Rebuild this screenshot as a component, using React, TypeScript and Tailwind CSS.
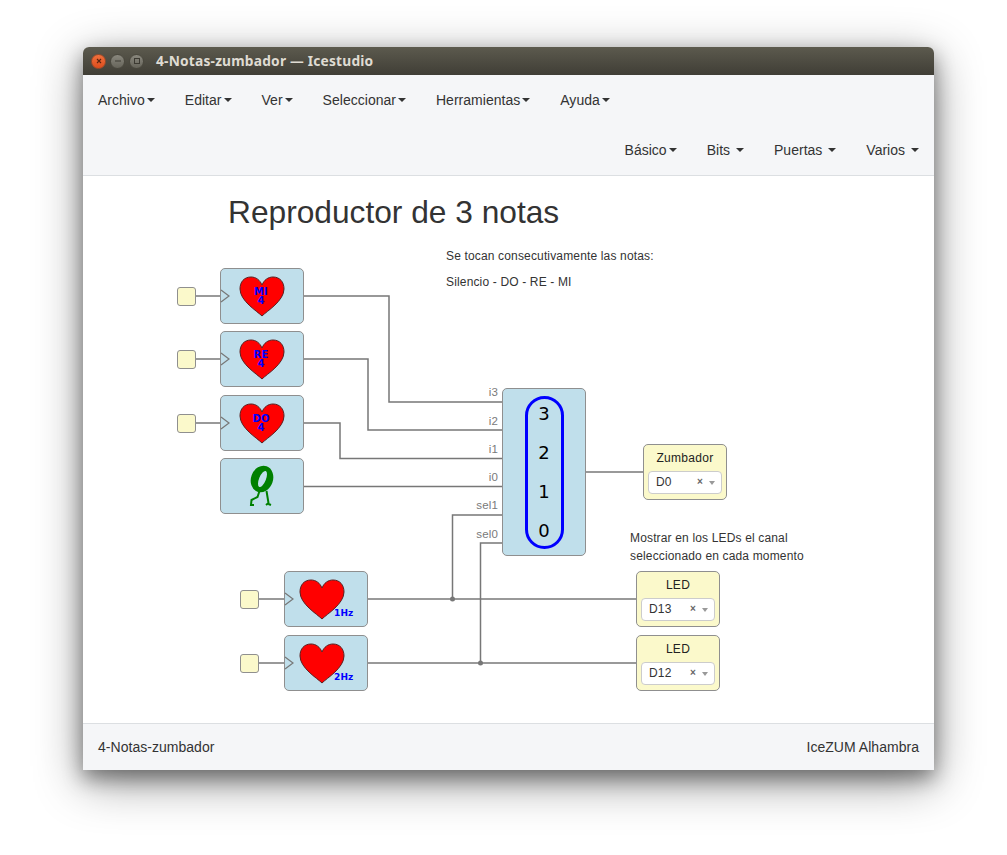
const menuLeft = ["Archivo", "Editar", "Ver", "Seleccionar", "Herramientas", "Ayuda"];

const Caret = () => (
  <span className="inline-block w-0 h-0 ml-[2px] align-middle border-t-4 border-x-4 border-x-transparent border-t-[#333]" />
);

const MenuItem = ({ label, spaced }: { label: string; spaced?: boolean }) => (
  <div className="h-[50px] px-[15px] flex items-center whitespace-pre tracking-[0.02px]">
    <span>{spaced ? label + " " : label}</span>
    <Caret />
  </div>
);

const Heart = ({ pos }: { pos: string }) => (
  <svg className={`absolute top-[7px] ${pos}`} width="46" height="41" viewBox="0 0 46 41">
    <path
      d="M23 40 C18 35 1 25 1 13 C1 6 5 1 12 1 C17 1 21 4 23 9 C25 4 29 1 34 1 C41 1 45 6 45 13 C45 25 28 35 23 40 Z"
      fill="#ff0000"
      stroke="#5a2020"
      strokeWidth="1"
    />
  </svg>
);

// little clock input arrow on the left side of a block
const ClockPin = () => (
  <svg className="absolute -left-px top-[19px]" width="12" height="16" viewBox="0 0 12 16">
    <path d="M1 2 L9 8 L1 14" fill="none" stroke="#777" strokeWidth="1.2" />
  </svg>
);

const NoteBlock = ({ note, pos }: { note: string; pos: string }) => (
  <div className={`absolute w-[84px] h-[56px] rounded-[5px] border border-[#8f8f8f] bg-[#c0dfeb] ${pos}`}>
    <Heart pos="left-[18px]" />
    <ClockPin />
    <span className="absolute left-[-1px] w-full text-center top-[18px] text-[10px] leading-[10px] font-bold text-[#0000ff] font-['DejaVu_Sans',sans-serif]">
      {note}
    </span>
    <span className="absolute left-[-1px] w-full text-center top-[27px] text-[10px] leading-[10px] font-bold text-[#0000ff] font-['DejaVu_Sans',sans-serif]">
      4
    </span>
  </div>
);

const FreqBlock = ({ freq, pos }: { freq: string; pos: string }) => (
  <div className={`absolute w-[84px] h-[56px] rounded-[5px] border border-[#8f8f8f] bg-[#c0dfeb] ${pos}`}>
    <Heart pos="left-[14px]" />
    <ClockPin />
    <span className="absolute left-[49px] top-[36px] text-[9px] leading-[10px] font-bold text-[#0000ff] font-['DejaVu_Sans',sans-serif]">
      {freq}
    </span>
  </div>
);

const ZeroBlock = ({ pos }: { pos: string }) => (
  <div className={`absolute w-[84px] h-[56px] rounded-[5px] border border-[#8f8f8f] bg-[#c0dfeb] ${pos}`}>
    <svg className="absolute -left-px -top-px" width="84" height="56" viewBox="0 0 84 56">
      <ellipse cx="42" cy="21" rx="11" ry="13.5" transform="rotate(20 42 21)" fill="#008000" />
      <ellipse cx="42.5" cy="21" rx="3.4" ry="8.6" transform="rotate(22 42.5 21)" fill="#c0dfeb" />
      <path d="M39.5 33 L37.5 39 L31.5 42 L31 47 L34 47" fill="none" stroke="#008000" strokeWidth="2" />
      <path d="M46.5 33 L48.5 45 L46 47 M48.5 46 L51 47" fill="none" stroke="#008000" strokeWidth="2" />
    </svg>
  </div>
);

const InputPin = ({ pos }: { pos: string }) => (
  <div className={`absolute w-[19px] h-[19px] rounded-[3px] border border-[#8f8f8f] bg-[#fbf9cb] ${pos}`} />
);

const OutputBlock = ({ label, pin, pos }: { label: string; pin: string; pos: string }) => (
  <div className={`absolute w-[84px] h-[56px] rounded-[5px] border border-[#8f8f8f] bg-[#fbf9cb] px-[4px] flex flex-col items-stretch ${pos}`}>
    <div className="h-[26px] flex items-center justify-center text-[12px] tracking-[0.3px] text-[#222]">{label}</div>
    <div className="h-[23px] flex items-center rounded-[4px] border border-[#ccc] bg-white pl-[7px] pr-[6px] pb-[1px] text-[12px] tracking-[0.2px] text-[#333]">
      <span className="flex-1">{pin}</span>
      <span className="text-[10px] leading-none font-bold text-[#666] mr-[6px]">×</span>
      <span className="inline-block w-0 h-0 mt-[2px] border-t-4 border-x-[3.5px] border-x-transparent border-t-[#999]" />
    </div>
  </div>
);

const PortLabel = ({ text, pos }: { text: string; pos: string }) => (
  <span className={`absolute w-[40px] text-right text-[11.5px] leading-[14px] text-[#7a7a7a] ${pos}`}>{text}</span>
);

const Wires = () => (
  <svg className="absolute left-0 top-0" width="851" height="547" viewBox="0 0 851 547" fill="none" stroke="#777" strokeWidth="1.5">
    <path d="M113 120 H137" />
    <path d="M113 183 H137" />
    <path d="M113 247 H137" />
    <path d="M176 423 H201" />
    <path d="M176 487 H201" />
    <path d="M221 120 H306 V226 H419" />
    <path d="M221 183 H285 V254 H419" />
    <path d="M221 247 H257 V282.5 H419" />
    <path d="M221 310.5 H419" />
    <path d="M503 296 H560" />
    <path d="M285 423 H553" />
    <path d="M285 487 H553" />
    <path d="M369.5 423 V339 H419" />
    <path d="M397.5 487 V367 H419" />
    <circle cx="369.5" cy="423" r="2.5" fill="#777" stroke="none" />
    <circle cx="397.5" cy="487" r="2.5" fill="#777" stroke="none" />
  </svg>
);

const Canvas = () => (
  <div className="relative flex-1 bg-white text-[12px] tracking-[0.155px] text-[#333]">
    <Wires />

    <h1 className="absolute left-[145px] top-[17px] text-[31.7px] leading-[38px] tracking-normal text-[#333] whitespace-nowrap">
      Reproductor de 3 notas
    </h1>
    <p className="absolute left-[363px] top-[73px] leading-[14px] whitespace-nowrap">Se tocan consecutivamente las notas:</p>
    <p className="absolute left-[363px] top-[99px] leading-[14px] whitespace-nowrap">Silencio - DO - RE - MI</p>
    <div className="absolute left-[547px] top-[353px] leading-[18px] whitespace-nowrap">
      <p>Mostrar en los LEDs el canal</p>
      <p>seleccionado en cada momento</p>
    </div>

    <InputPin pos="left-[94px] top-[111px]" />
    <InputPin pos="left-[94px] top-[174px]" />
    <InputPin pos="left-[94px] top-[238px]" />
    <InputPin pos="left-[157px] top-[414px]" />
    <InputPin pos="left-[157px] top-[478px]" />

    <NoteBlock note="MI" pos="left-[137px] top-[92px]" />
    <NoteBlock note="RE" pos="left-[137px] top-[155px]" />
    <NoteBlock note="DO" pos="left-[137px] top-[219px]" />
    <ZeroBlock pos="left-[137px] top-[282px]" />
    <FreqBlock freq="1Hz" pos="left-[201px] top-[395px]" />
    <FreqBlock freq="2Hz" pos="left-[201px] top-[459px]" />

    <PortLabel text="i3" pos="left-[375px] top-[209px]" />
    <PortLabel text="i2" pos="left-[375px] top-[238px]" />
    <PortLabel text="i1" pos="left-[375px] top-[266px]" />
    <PortLabel text="i0" pos="left-[375px] top-[294px]" />
    <PortLabel text="sel1" pos="left-[375px] top-[322px]" />
    <PortLabel text="sel0" pos="left-[375px] top-[351px]" />

    {/* Multiplexer */}
    <div className="absolute left-[419px] top-[212px] w-[84px] h-[168px] rounded-[5px] border border-[#8f8f8f] bg-[#c0dfeb] flex items-center justify-center">
      <div className="w-[39px] h-[153px] rounded-full border-[3px] border-[#0000ff] flex flex-col items-center justify-between pt-[2px] pb-[1px] text-[18px] leading-[26px] tracking-normal text-black font-['DejaVu_Sans',sans-serif]">
        <span>3</span>
        <span>2</span>
        <span>1</span>
        <span>0</span>
      </div>
    </div>

    <OutputBlock label="Zumbador" pin="D0" pos="left-[560px] top-[268px]" />
    <OutputBlock label="LED" pin="D13" pos="left-[553px] top-[395px]" />
    <OutputBlock label="LED" pin="D12" pos="left-[553px] top-[459px]" />
  </div>
);

export default function App() {
  return (
    <div className="w-[1007px] h-[855px] bg-white pt-[47px] pl-[83px] overflow-hidden font-['Liberation_Sans',sans-serif]">
      <div className="w-[851px] h-[723px] flex flex-col rounded-t-[6px] shadow-[0_8px_20px_rgba(0,0,0,0.4),0_12px_48px_rgba(0,0,0,0.42)]">
        {/* Title bar */}
        <div className="h-[28px] shrink-0 flex items-center rounded-t-[6px] bg-gradient-to-b from-[#5c5a4e] to-[#403e36]">
          <div className="flex items-center gap-[4px] pl-[8px]">
            <div className="w-[15px] h-[15px] rounded-full bg-gradient-to-b from-[#f0703c] to-[#dc4c1c] border border-[#9c4a2a] flex items-center justify-center">
              <svg width="6" height="6" viewBox="0 0 6 6" stroke="#5a2410" strokeWidth="1.1">
                <path d="M1 1 L5 5 M5 1 L1 5" />
              </svg>
            </div>
            <div className="w-[15px] h-[15px] rounded-full bg-gradient-to-b from-[#8a887e] to-[#66645a] border border-[#4a483e] flex items-center justify-center">
              <svg width="8" height="6" viewBox="0 0 8 6" stroke="#3c3a32" strokeWidth="1">
                <path d="M1 3 H7" />
              </svg>
            </div>
            <div className="w-[15px] h-[15px] rounded-full bg-gradient-to-b from-[#8a887e] to-[#66645a] border border-[#4a483e] flex items-center justify-center">
              <svg width="8" height="8" viewBox="0 0 8 8" fill="none" stroke="#3c3a32" strokeWidth="1">
                <rect x="1.5" y="1.5" width="5" height="5" />
              </svg>
            </div>
          </div>
          <span className="ml-[12px] text-[13.75px] font-bold tracking-[0.2px] text-[#dfdbd2] font-['Noto_Sans',sans-serif]">
            4-Notas-zumbador — Icestudio
          </span>
        </div>

        {/* Menus */}
        <div className="h-[101px] shrink-0 bg-[#f5f6f8] border-b border-[#dcdfe2] text-[14px] text-[#333]">
          <div className="flex">
            {menuLeft.map((m) => (
              <MenuItem key={m} label={m} />
            ))}
          </div>
          <div className="flex justify-end">
            <MenuItem label="Básico" />
            <MenuItem label="Bits" spaced />
            <MenuItem label="Puertas" spaced />
            <MenuItem label="Varios" spaced />
          </div>
        </div>

        <Canvas />

        {/* Footer */}
        <div className="h-[47px] shrink-0 bg-[#f5f6f8] border-t border-[#dcdfe2] px-[15px] flex items-center justify-between text-[14px] tracking-[0.03px] text-[#333]">
          <span>4-Notas-zumbador</span>
          <span>IceZUM Alhambra</span>
        </div>
      </div>
    </div>
  );
}
